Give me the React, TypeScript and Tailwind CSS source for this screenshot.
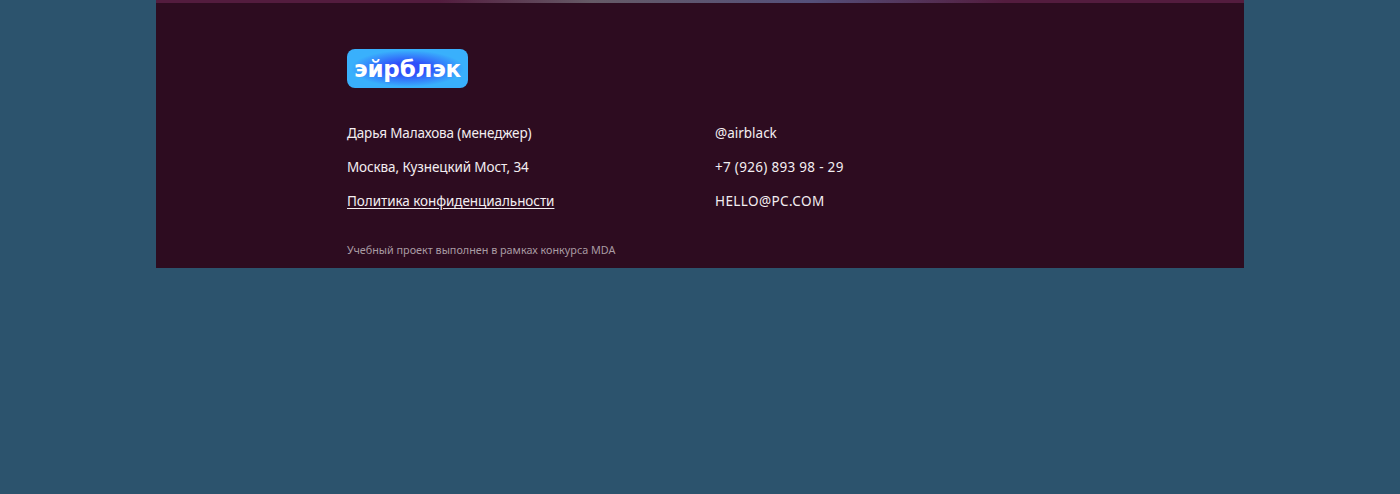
export default function App() {
  return (
    <div className="min-h-[494px] bg-[#2c536d] font-['Noto_Sans',sans-serif] text-[#f3eef1]">
      <footer className="ml-[156px] h-[268px] w-[1088px] bg-[#2d0c20]">
        {/* Top stripe */}
        <div className="h-[3px] bg-[linear-gradient(90deg,#531c3e_0%,#531c3e_26%,#655a66_40%,#54507a_60%,#531c3e_78%)]" />

        <div className="pl-[191px] pt-[46px]">
          {/* Logo */}
          <div className="flex h-[39px] w-[121px] items-center justify-center rounded-[8px] pt-[2px] bg-[radial-gradient(ellipse_at_center,#2f4ffa_22%,#39b0fc_66%)]">
            <span className="block font-['DejaVu_Sans',sans-serif] text-[23px] font-bold leading-none tracking-[-0.2px] text-white">
              эйрблэк
            </span>
          </div>

          {/* Contacts */}
          <div className="mt-[35px] grid grid-cols-[368px_1fr] gap-y-[14px] text-[13.5px] leading-[20px]">
            <p className="tracking-[-0.12px]">Дарья Малахова (менеджер)</p>
            <p>@airblack</p>
            <p className="tracking-[-0.12px]">Москва, Кузнецкий Мост, 34</p>
            <p className="tracking-[0.3px]">+7 (926) 893 98 - 29</p>
            <a className="tracking-[-0.07px] underline underline-offset-2">Политика конфиденциальности</a>
            <p className="tracking-[0.4px]">HELLO@PC.COM</p>
          </div>

          <p className="mt-[31px] text-[10.8px] leading-[16px] text-[#a99ba3]">
            Учебный проект выполнен в рамках конкурса MDA
          </p>
        </div>
      </footer>
    </div>
  );
}
